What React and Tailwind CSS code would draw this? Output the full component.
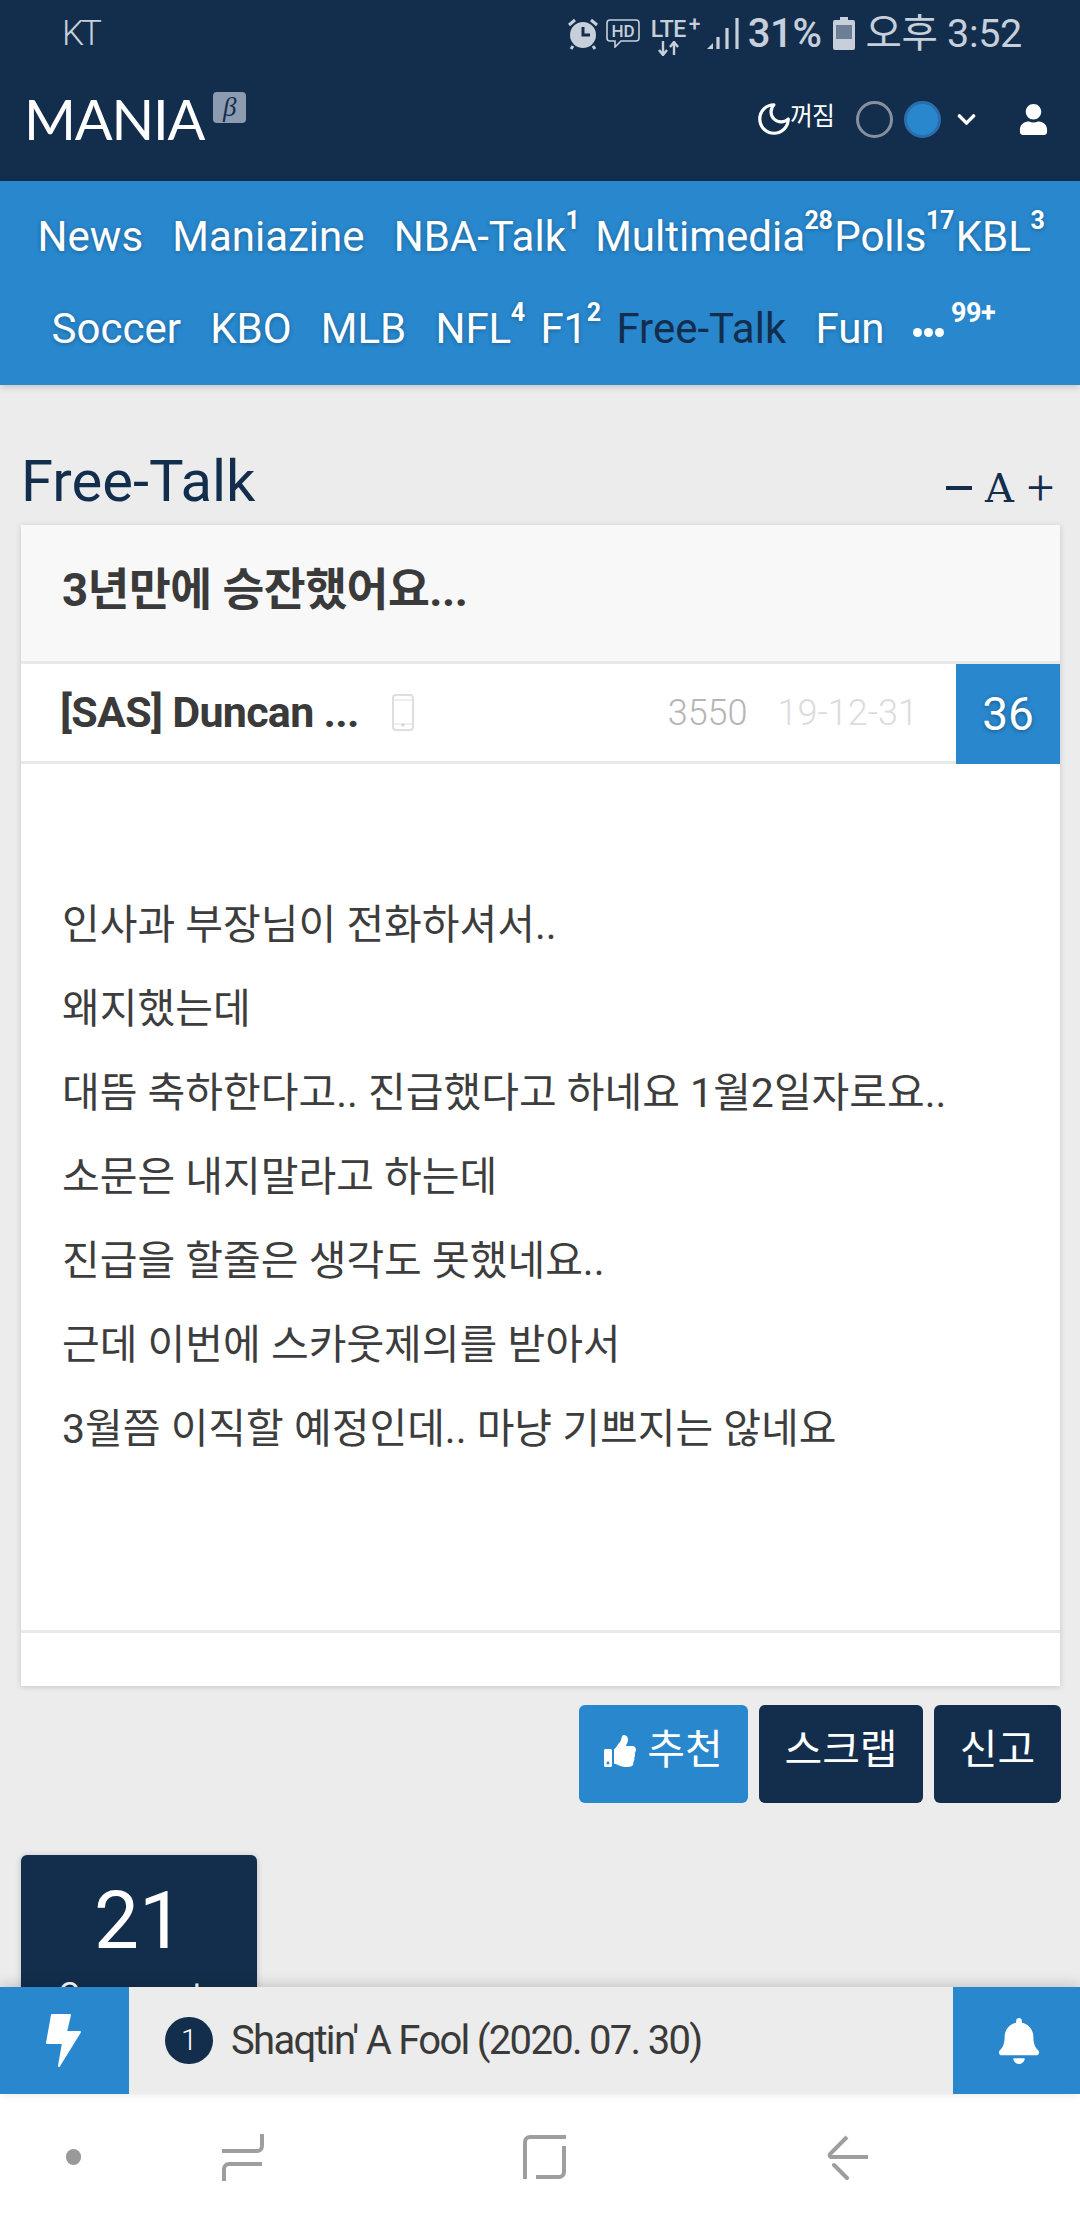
import React from "react";
import { FaBell, FaChevronDown, FaThumbsUp, FaUser } from "react-icons/fa";

function NavItem({ label, sup, active }) {
  return (
    <a className={`relative px-[14.6px] ${active ? "text-[#132e4d] [text-shadow:none]" : "text-white [text-shadow:0_1px_4px_rgba(0,0,0,0.28)]"}`}>
      {label}
      {sup ? (
        <sup className="absolute top-[2px] left-[calc(100%-15px)] text-[25px] leading-[28px] font-bold text-white whitespace-nowrap tracking-[-0.5px]">
          {sup}
        </sup>
      ) : null}
    </a>
  );
}

function StatusBar() {
  return (
    <div className="flex h-[60px] items-center justify-between pl-[62px] pr-[58px] pt-[7px] text-[#c6cfda]">
      <span className="text-[35px] font-light leading-none tracking-[-3px]">KT</span>
      <div className="flex items-center">
        <svg width="32" height="33" viewBox="0 0 32 33" className="mr-[7px]">
          <circle cx="16" cy="18" r="13" fill="#c6cfda" />
          <path d="M16 10v8h7" fill="none" stroke="#132e4d" strokeWidth="3" />
          <path d="M2 8 8 3M30 8 24 3M6 29 4 32M26 29 28 32" stroke="#c6cfda" strokeWidth="3" />
        </svg>
        <svg width="34" height="29" viewBox="0 0 34 29" className="mr-[11px]">
          <path d="M4 1h26a3 3 0 0 1 3 3v15a3 3 0 0 1-3 3H15l-6 6v-6H4a3 3 0 0 1-3-3V4a3 3 0 0 1 3-3Z" fill="none" stroke="#c6cfda" strokeWidth="1.6" />
          <text x="17" y="18" textAnchor="middle" fontSize="17" fontWeight="500" fill="#c6cfda">HD</text>
        </svg>
        <div className="relative mr-[4px] h-[34px] w-[52px]">
          <span className="absolute left-0 top-[0px] text-[23px] font-medium leading-[26px] tracking-[-0.5px]">LTE</span>
          <span className="absolute left-[38px] top-[-5px] text-[21px] font-medium leading-[24px]">+</span>
          <svg width="22" height="15" viewBox="0 0 22 15" className="absolute left-[7px] top-[24px]">
            <path d="M5 0v13M1 9l4 5 4-5M16 14V1M12 6l4-5 4 5" fill="none" stroke="#c6cfda" strokeWidth="2.4" />
          </svg>
        </div>
        <svg width="34" height="33" viewBox="0 0 34 33" className="mr-[7px]">
          <path d="M0 32 6 26V32Z" fill="#c6cfda" />
          <path d="M11 32V20M20 32V11M30 32V1" stroke="#c6cfda" strokeWidth="3.2" />
        </svg>
        <span className="text-[40px] font-medium leading-none tracking-[-0.4px]">31%</span>
        <svg width="22" height="33" viewBox="0 0 22 33" className="ml-[12px] mr-[10px]">
          <path d="M7 0h8v3h5a2 2 0 0 1 2 2v26a2 2 0 0 1-2 2H2a2 2 0 0 1-2-2V5a2 2 0 0 1 2-2h5Z" fill="#c6cfda" />
          <rect x="3" y="8" width="16" height="14" fill="#6c7f97" />
        </svg>
        <span className="text-[39.5px] leading-none tracking-[-0.3px]">오후 3:52</span>
      </div>
    </div>
  );
}

function Header() {
  return (
    <header className="h-[181px] shrink-0 bg-[#132e4d]">
      <StatusBar />
      <div className="flex h-[121px] items-start justify-between pl-[24px] pr-[31px]">
        <div className="flex items-start pt-[25px]">
          <span className="font-['Lato',sans-serif] text-[56px] leading-[68px] text-white tracking-[-1.2px]">MANIA</span>
          <span className="ml-[9px] mt-[7px] flex h-[31px] w-[33px] items-center justify-center rounded-[4px] bg-[#8d9bb0] font-['Liberation_Serif',serif] text-[27px] italic leading-none text-[#132e4d]">β</span>
        </div>
        <div className="flex items-center pt-[40px]">
          <svg width="38" height="38" viewBox="0 0 24 24" fill="none" stroke="#fff" strokeWidth="2" strokeLinecap="round" strokeLinejoin="round" className="-mr-[3px]">
            <path d="M12 3a6 6 0 0 0 9 9 9 9 0 1 1-9-9Z" />
          </svg>
          <span className="mt-[-6px] text-[25px] leading-none text-white tracking-[-1px]">꺼짐</span>
          <span className="ml-[22px] h-[37px] w-[37px] rounded-full border-[3px] border-[#87909d]" />
          <span className="ml-[11px] h-[37px] w-[37px] rounded-full border-[3px] border-[#2a6ead] bg-[#2887cd]" />
          <FaChevronDown className="ml-[15px] text-[21px] text-white" />
          <FaUser className="ml-[41px] text-[31px] text-white" />
        </div>
      </div>
    </header>
  );
}

function Nav() {
  return (
    <nav className="relative z-10 h-[204px] shrink-0 bg-[#2887cd] pt-[9px] text-[42px] shadow-[0_2px_7px_rgba(0,0,0,0.18)]">
      <div className="flex h-[92px] items-center whitespace-nowrap pl-[23px]">
        <NavItem label="News" />
        <NavItem label="Maniazine" />
        <NavItem label="NBA-Talk" sup="1" />
        <NavItem label="Multimedia" sup="28" />
        <NavItem label="Polls" sup="17" />
        <NavItem label="KBL" sup="3" />
      </div>
      <div className="flex h-[92px] items-center whitespace-nowrap pl-[37px]">
        <NavItem label="Soccer" />
        <NavItem label="KBO" />
        <NavItem label="MLB" />
        <NavItem label="NFL" sup="4" />
        <NavItem label="F1" sup="2" />
        <NavItem label="Free-Talk" active />
        <NavItem label="Fun" />
        <a className="relative ml-[14px] flex w-[31px] items-center justify-between pt-[8px]">
          <span className="h-[9px] w-[9px] rounded-full bg-white" />
          <span className="h-[9px] w-[9px] rounded-full bg-white" />
          <span className="h-[9px] w-[9px] rounded-full bg-white" />
          <sup className="absolute top-[-21px] left-[38px] text-[27px] leading-[28px] font-bold text-white tracking-[-0.5px]">99+</sup>
        </a>
      </div>
    </nav>
  );
}

const lines = [
  "인사과 부장님이 전화하셔서..",
  "왜지했는데",
  "대뜸 축하한다고.. 진급했다고 하네요 1월2일자로요..",
  "소문은 내지말라고 하는데",
  "진급을 할줄은 생각도 못했네요..",
  "근데 이번에 스카웃제의를 받아서",
  "3월쯤 이직할 예정인데.. 마냥 기쁘지는 않네요",
];

function Article() {
  return (
    <article className="mx-[21px] w-[1039px] bg-white shadow-[0_1px_6px_rgba(0,0,0,0.16)]">
      <h1 className="flex h-[139px] items-center border-b-[3px] border-[#e9e9e9] bg-[#f8f8f8] pb-[4px] pl-[41px] text-[45.5px] font-bold leading-none tracking-[-0.5px] text-[#3a3a3a]">
        3년만에 승잔했어요...
      </h1>
      <div className="flex h-[100px] items-stretch border-b-[3px] border-[#e9e9e9]">
        <div className="flex flex-1 items-center pl-[39px]">
          <span className="text-[43px] font-bold tracking-[-0.7px] text-[#3a3a3a]">[SAS] Duncan ...</span>
          <svg width="22" height="37" viewBox="0 0 22 37" className="ml-[33px]">
            <rect x="1" y="1" width="20" height="35" rx="3" fill="none" stroke="#dedede" strokeWidth="2" />
            <path d="M1 30h20M1 6h20" stroke="#dedede" strokeWidth="1" />
            <circle cx="11" cy="31" r="1.5" fill="#cfcfcf" />
          </svg>
          <span className="ml-auto text-[36px] font-light text-[#b5b5b5]">3550</span>
          <span className="ml-[30px] mr-[38px] text-[36px] font-light text-[#dcdcdc]">19-12-31</span>
        </div>
        <div className="-mb-[3px] flex w-[104px] items-center justify-center bg-[#2887cd] text-[46px] text-white [text-shadow:0_1px_4px_rgba(0,0,0,0.35)]">36</div>
      </div>
      <div className="h-[869px] border-b-[3px] border-[#e9e9e9] pt-[119px] pl-[41px] text-[41px] leading-[84px] text-[#3d3d3d]">
        {lines.map((l) => (
          <p key={l}>{l}</p>
        ))}
      </div>
      <div className="h-[53px]" />
    </article>
  );
}

function Buttons() {
  return (
    <div className="mt-[19px] flex h-[98px] justify-end gap-[11px] pr-[19px] text-[41px] text-white">
      <button className="flex w-[169px] items-center justify-center gap-[11px] rounded-[6px] bg-[#2887cd] pb-[6px]">
        <FaThumbsUp className="text-[32px]" />
        <span>추천</span>
      </button>
      <button className="w-[164px] rounded-[6px] bg-[#132e4d] pb-[6px]">스크랩</button>
      <button className="w-[127px] rounded-[6px] bg-[#132e4d] pb-[6px]">신고</button>
    </div>
  );
}

function Bottom() {
  return (
    <div className="relative z-10 flex h-[107px] shrink-0 items-stretch bg-[#ececec] shadow-[0_-3px_12px_rgba(0,0,0,0.16)]">
      <div className="flex w-[129px] items-center justify-center bg-[#2887cd] pr-[2px]">
        <svg width="36" height="54" viewBox="0 0 36 54" fill="#fff" stroke="#fff" strokeWidth="2" strokeLinejoin="round">
          <path d="M6 1 24 1 20 18 34 18 13 52 17 29 1 29Z" />
        </svg>
      </div>
      <div className="flex flex-1 items-center pl-[36px]">
        <span className="flex h-[47px] w-[48px] items-center justify-center rounded-full bg-[#132e4d] text-[29px] font-light text-white">1</span>
        <span className="ml-[18px] text-[40px] font-normal tracking-[-1.7px] text-[#3a3a3a]">Shaqtin' A Fool (2020. 07. 30)</span>
      </div>
      <div className="flex w-[127px] items-center justify-center bg-[#2887cd] pl-[4px]">
        <FaBell className="text-[46px] text-white" />
      </div>
    </div>
  );
}

function SystemNav() {
  return (
    <div className="flex h-[126px] shrink-0 items-center bg-white pl-[66px]">
      <span className="h-[16px] w-[15px] rounded-full bg-[#999]" />
      <svg width="42" height="47" viewBox="0 0 42 47" fill="none" stroke="#9e9e9e" strokeWidth="4" className="ml-[141px]">
        <path d="M40 0v12a5 5 0 0 1-5 5H0M40 30H7a5 5 0 0 0-5 5v12" />
      </svg>
      <svg width="43" height="44" viewBox="0 0 43 44" fill="none" stroke="#9e9e9e" strokeWidth="4" className="ml-[259px]">
        <path d="M43 2H7a5 5 0 0 0-5 5v37M41 11v26a5 5 0 0 1-5 5H13" />
      </svg>
      <svg width="42" height="45" viewBox="0 0 42 45" fill="none" stroke="#9e9e9e" strokeWidth="4" strokeLinecap="round" className="ml-[261px]">
        <path d="M20 2 3 19a2 2 0 0 0 1 3h37" strokeLinecap="butt" />
        <path d="M7 30 20 43" />
      </svg>
    </div>
  );
}

export default function App() {
  return (
    <div className="flex h-[2220px] w-[1080px] flex-col overflow-hidden bg-[#ececec] font-['Roboto','Noto_Sans_CJK_KR',sans-serif]">
      <Header />
      <Nav />
      <main className="min-h-0 flex-1 overflow-hidden">
        <div className="flex h-[140px] items-end justify-between pb-[9px] pl-[21px] pr-[26px] text-[#132e4d]">
          <h2 className="text-[58px] leading-[70px] font-normal">Free-Talk</h2>
          <div className="flex items-center gap-[13px] pb-[6px]">
            <span className="h-[4px] w-[26px] bg-[#132e4d]" />
            <span className="font-['DejaVu_Serif',serif] text-[40px] leading-[44px]">A</span>
            <span className="text-[48px] font-light leading-[44px]">+</span>
          </div>
        </div>
        <Article />
        <Buttons />
        <section className="ml-[21px] mt-[52px] h-[200px] w-[236px] rounded-[6px] bg-[#132e4d] pt-[20px] text-center text-white shadow-[0_1px_6px_rgba(0,0,0,0.2)]">
          <div className="text-[80px] font-normal leading-[92px]">21</div>
          <div className="mt-[8px] text-[33px] leading-[40px]">Comments</div>
        </section>
      </main>
      <Bottom />
      <SystemNav />
    </div>
  );
}
